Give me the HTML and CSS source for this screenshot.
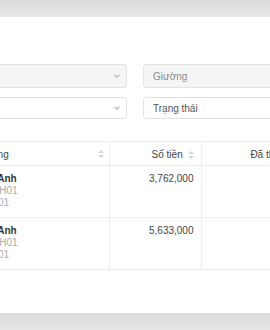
FILE: index.html
```html
<!DOCTYPE html>
<html lang="vi">
<head>
    <meta charset="UTF-8">
    <meta name="viewport" content="width=device-width, initial-scale=1.0">
    <title>Danh sách thanh toán</title>
    <link rel="stylesheet" href="styles.css">
</head>
<body>
    <!-- backdrop above the dialog -->
    <div class="backdrop backdrop-top"></div>

    <div class="sheet">
        <div class="filters">
            <div class="select is-disabled">
                <span class="select-text">Căn hộ</span>
                <span class="chevron"></span>
            </div>
            <div class="select is-disabled">
                <span class="select-text">Giường</span>
                <span class="chevron"></span>
            </div>
            <div class="select short">
                <span class="select-text">Tháng</span>
                <span class="chevron"></span>
            </div>
            <div class="select short">
                <span class="select-text dark">Trạng thái</span>
                <span class="chevron"></span>
            </div>
        </div>

        <table class="data-table">
            <thead>
                <tr>
                    <th class="col-guest">Tên khách hàng <span class="sort"></span></th>
                    <th class="col-amount">Số tiền <span class="sort"></span></th>
                    <th class="col-paid">Đã thanh toán <span class="sort"></span></th>
                </tr>
            </thead>
            <tbody>
                <tr>
                    <td>
                        <div class="guest-name">Nguyễn Văn Anh</div>
                        <div class="guest-meta">Mã căn hộ : CH01</div>
                        <div class="guest-meta">Mã giường: P01</div>
                    </td>
                    <td class="num">3,762,000</td>
                    <td class="num"></td>
                </tr>
                <tr>
                    <td>
                        <div class="guest-name">Nguyễn Vân Anh</div>
                        <div class="guest-meta">Mã căn hộ : CH01</div>
                        <div class="guest-meta">Mã giường: P01</div>
                    </td>
                    <td class="num">5,633,000</td>
                    <td class="num"></td>
                </tr>
            </tbody>
        </table>
    </div>

    <!-- backdrop below the dialog -->
    <div class="backdrop backdrop-bottom"></div>
</body>
</html>
```

FILE: styles.css
```css
/* Global styles */
body {
    margin: 0;
    padding: 0;
    width: 270px;
    height: 330px;
    overflow: hidden;
    background-color: #e4e4e4;
    font-family: "Liberation Sans", Arial, sans-serif;
    font-size: 10px;
    color: #333;
}

/* Grey backdrop bands */
.backdrop {
    height: 17px;
    background: linear-gradient(#dcdcdc, #e6e6e6);
}

/* Dialog body */
.sheet {
    width: 410px;
    height: 296px;
    margin-left: -70px;
    padding-top: 47px;
    box-sizing: border-box;
    background-color: #fff;
}

/* Filter selects */
.filters {
    display: grid;
    grid-template-columns: 197px 197px;
    column-gap: 16px;
    row-gap: 9px;
}

.select {
    height: 24px;
    display: flex;
    align-items: center;
    justify-content: space-between;
    padding: 0 5px 0 9px;
    border: 1px solid #e3e3e3;
    border-radius: 3px;
    box-sizing: border-box;
    background-color: #fff;
}

.select.short {
    height: 22px;
}

.select.is-disabled {
    background-color: #f5f5f5;
}

.select-text {
    color: #8a8a8a;
}

.select-text.dark {
    color: #555;
}

.chevron {
    width: 3px;
    height: 3px;
    margin-right: 2px;
    margin-top: -2px;
    border-right: 1px solid #aaa;
    border-bottom: 1px solid #aaa;
    transform: rotate(45deg);
}

/* Table */
.data-table {
    width: 402px;
    margin-top: 22px;
    border-collapse: collapse;
    table-layout: fixed;
}

.data-table th,
.data-table td {
    border: 1px solid #ededed;
    border-left: none;
    padding: 0 7px;
}

.data-table th {
    height: 24px;
    padding-top: 2px;
    box-sizing: border-box;
    font-weight: normal;
    color: #444;
    text-align: left;
}

.data-table td {
    height: 52px;
    vertical-align: top;
    padding-top: 7px;
    line-height: 12px;
    box-sizing: border-box;
}

.col-guest {
    width: 179px;
}

.col-amount {
    width: 92px;
    text-align: right !important;
}

.col-paid {
    text-align: right !important;
}

.num {
    text-align: right;
    color: #444;
}

.guest-name {
    color: #333;
    font-weight: bold;
}

.guest-meta {
    color: #aaa;
}

/* Sort carets */
.sort {
    display: inline-block;
    position: relative;
    width: 6px;
    height: 8px;
    margin-left: 2px;
    vertical-align: middle;
}

.sort::before,
.sort::after {
    content: "";
    position: absolute;
    left: 0;
    border-left: 3px solid transparent;
    border-right: 3px solid transparent;
}

.sort::before {
    top: 0;
    border-bottom: 3px solid #d6d6d6;
}

.sort::after {
    bottom: 0;
    border-top: 3px solid #d6d6d6;
}

.col-guest .sort {
    float: right;
    margin-top: 1px;
    margin-right: -2px;
}
```
